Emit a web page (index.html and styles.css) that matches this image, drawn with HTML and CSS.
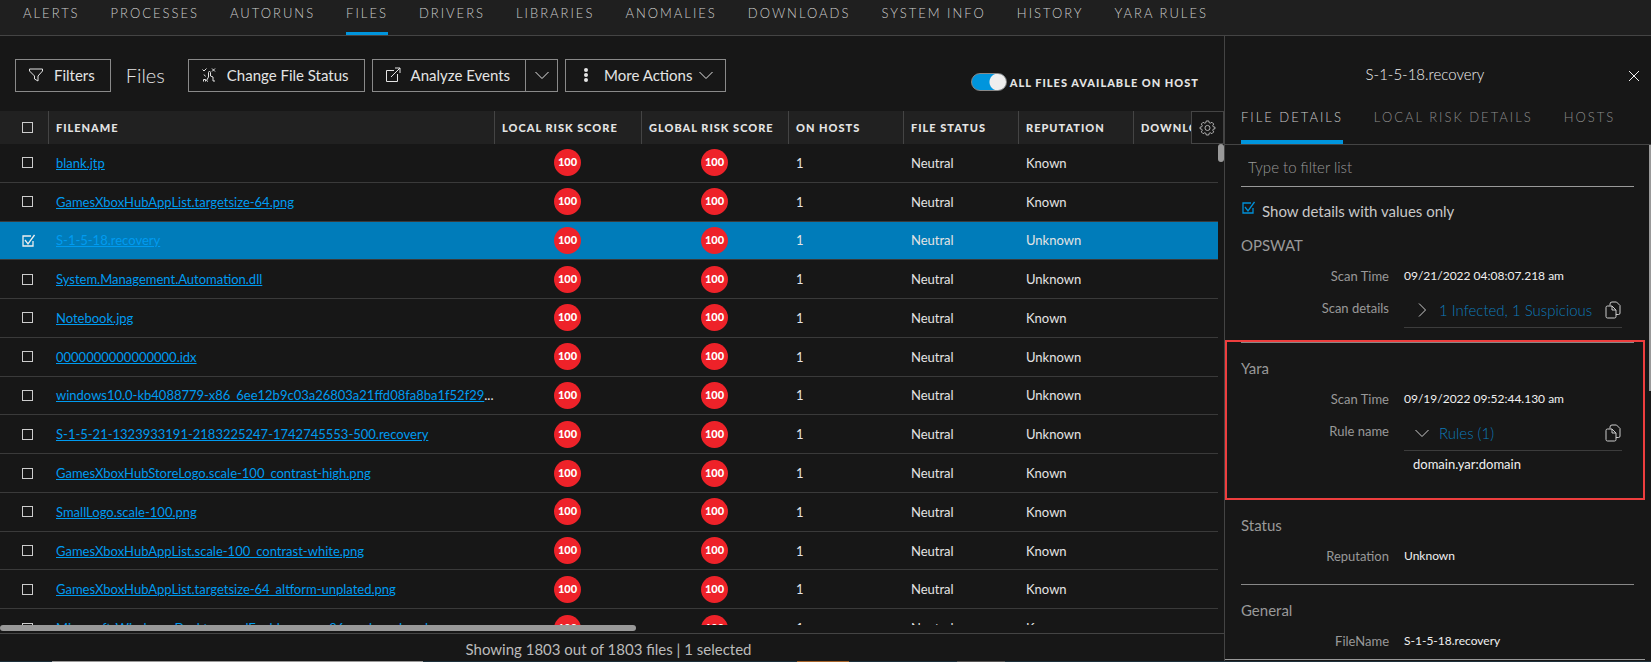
FILE: index.html
```html
<!DOCTYPE html>
<html lang="en">
<head>
    <meta charset="UTF-8">
    <meta name="viewport" content="width=device-width, initial-scale=1.0">
    <title>Hosts - Files</title>
    <link rel="stylesheet" href="styles.css">
</head>
<body>

    <svg class="sprite" aria-hidden="true">
        <symbol id="copy" viewBox="0 0 16 18">
            <path d="M5 4.500V3a2 2 0 0 1 2-2h4.500L15 4.500V12a1.500 1.500 0 0 1-1.500 1.500H11"/>
            <path d="M2.500 5H7l4 4v6.500a1.500 1.500 0 0 1-1.500 1.500h-7A1.500 1.500 0 0 1 1 15.500v-9A1.500 1.500 0 0 1 2.500 5zM7 5v4h4"/>
        </symbol>
        <symbol id="down" viewBox="0 0 16 16">
            <path d="M1.500 5L8 11.500 14.500 5"/>
        </symbol>
        <symbol id="right" viewBox="0 0 16 16">
            <path d="M5 1.500L11.500 8 5 14.500"/>
        </symbol>
    </svg>

    <nav class="top-nav">
        <a href="#">ALERTS</a>
        <a href="#">PROCESSES</a>
        <a href="#">AUTORUNS</a>
        <a href="#" class="active">FILES</a>
        <a href="#">DRIVERS</a>
        <a href="#">LIBRARIES</a>
        <a href="#">ANOMALIES</a>
        <a href="#">DOWNLOADS</a>
        <a href="#">SYSTEM INFO</a>
        <a href="#">HISTORY</a>
        <a href="#">YARA RULES</a>
    </nav>

    <div class="content">
        <main class="files">
            <div class="toolbar">
                <button class="btn filters">
                    <svg class="icon" viewBox="0 0 16 16"><path d="M1.500 2h13v2L10 9v5l-3.500-2V9L1.500 4z"/></svg>
                    Filters
                </button>
                <h1>Files</h1>
                <button class="btn status">
                    <svg class="icon" viewBox="0 0 16 16"><path d="M1.500 2.500L3 4l2.500-2.500M11 1.500l3 3M14 1.500l-3 3M7.500 10V5.500a1 1 0 0 1 2 0V9l2.500 1v4M2.500 14.500v-2h2v2M4.500 9.500L3 7.500M7.500 10l-2 3.500 1.500 1M12 14h2"/></svg>
                    Change File Status
                </button>
                <div class="btn-group">
                    <button class="btn analyze">
                        <svg class="icon" viewBox="0 0 16 16"><path d="M9 3.500H1.500v11h11V7M6 10l9-9M10 1h5v5"/></svg>
                        Analyze Events
                    </button>
                    <button class="btn caret" aria-label="Analyze options"><svg class="icon"><use href="#down"/></svg></button>
                </div>
                <button class="btn more">
                    <svg class="icon dots" viewBox="0 0 16 16"><circle cx="8" cy="3" r="2"/><circle cx="8" cy="8" r="2"/><circle cx="8" cy="13" r="2"/></svg>
                    More Actions
                    <svg class="icon"><use href="#down"/></svg>
                </button>
                <label class="toggle">
                    <input type="checkbox" role="switch" checked>
                    ALL FILES AVAILABLE ON HOST
                </label>
            </div>

            <div class="grid">
                <div class="grid-scroll">
                    <table>
                        <colgroup>
                            <col class="c-check">
                            <col class="c-name">
                            <col class="c-score">
                            <col class="c-score">
                            <col class="c-text">
                            <col class="c-text">
                            <col class="c-text">
                            <col>
                        </colgroup>
                        <thead>
                            <tr>
                                <th><input type="checkbox" class="check" aria-label="Select all"></th>
                                <th>FILENAME</th>
                                <th>LOCAL RISK SCORE</th>
                                <th>GLOBAL RISK SCORE</th>
                                <th>ON HOSTS</th>
                                <th>FILE STATUS</th>
                                <th>REPUTATION</th>
                                <th>DOWNLOADED</th>
                            </tr>
                        </thead>
                        <tbody>
                            <tr>
                                <td><input type="checkbox" class="check" aria-label="Select file"></td>
                                <td><a href="#">blank.jtp</a></td>
                                <td><span class="score">100</span></td>
                                <td><span class="score">100</span></td>
                                <td>1</td><td>Neutral</td><td>Known</td><td></td>
                            </tr>
                            <tr>
                                <td><input type="checkbox" class="check" aria-label="Select file"></td>
                                <td><a href="#">GamesXboxHubAppList.targetsize-64.png</a></td>
                                <td><span class="score">100</span></td>
                                <td><span class="score">100</span></td>
                                <td>1</td><td>Neutral</td><td>Known</td><td></td>
                            </tr>
                            <tr class="selected">
                                <td><input type="checkbox" class="check" aria-label="Select file" checked></td>
                                <td><a href="#">S-1-5-18.recovery</a></td>
                                <td><span class="score">100</span></td>
                                <td><span class="score">100</span></td>
                                <td>1</td><td>Neutral</td><td>Unknown</td><td></td>
                            </tr>
                            <tr>
                                <td><input type="checkbox" class="check" aria-label="Select file"></td>
                                <td><a href="#">System.Management.Automation.dll</a></td>
                                <td><span class="score">100</span></td>
                                <td><span class="score">100</span></td>
                                <td>1</td><td>Neutral</td><td>Unknown</td><td></td>
                            </tr>
                            <tr>
                                <td><input type="checkbox" class="check" aria-label="Select file"></td>
                                <td><a href="#">Notebook.jpg</a></td>
                                <td><span class="score">100</span></td>
                                <td><span class="score">100</span></td>
                                <td>1</td><td>Neutral</td><td>Known</td><td></td>
                            </tr>
                            <tr>
                                <td><input type="checkbox" class="check" aria-label="Select file"></td>
                                <td><a href="#">0000000000000000.idx</a></td>
                                <td><span class="score">100</span></td>
                                <td><span class="score">100</span></td>
                                <td>1</td><td>Neutral</td><td>Unknown</td><td></td>
                            </tr>
                            <tr>
                                <td><input type="checkbox" class="check" aria-label="Select file"></td>
                                <td><a href="#">windows10.0-kb4088779-x86_6ee12b9c03a26803a21ffd08fa8ba1f52f29</a>...</td>
                                <td><span class="score">100</span></td>
                                <td><span class="score">100</span></td>
                                <td>1</td><td>Neutral</td><td>Unknown</td><td></td>
                            </tr>
                            <tr>
                                <td><input type="checkbox" class="check" aria-label="Select file"></td>
                                <td><a href="#">S-1-5-21-1323933191-2183225247-1742745553-500.recovery</a></td>
                                <td><span class="score">100</span></td>
                                <td><span class="score">100</span></td>
                                <td>1</td><td>Neutral</td><td>Unknown</td><td></td>
                            </tr>
                            <tr>
                                <td><input type="checkbox" class="check" aria-label="Select file"></td>
                                <td><a href="#">GamesXboxHubStoreLogo.scale-100_contrast-high.png</a></td>
                                <td><span class="score">100</span></td>
                                <td><span class="score">100</span></td>
                                <td>1</td><td>Neutral</td><td>Known</td><td></td>
                            </tr>
                            <tr>
                                <td><input type="checkbox" class="check" aria-label="Select file"></td>
                                <td><a href="#">SmallLogo.scale-100.png</a></td>
                                <td><span class="score">100</span></td>
                                <td><span class="score">100</span></td>
                                <td>1</td><td>Neutral</td><td>Known</td><td></td>
                            </tr>
                            <tr>
                                <td><input type="checkbox" class="check" aria-label="Select file"></td>
                                <td><a href="#">GamesXboxHubAppList.scale-100_contrast-white.png</a></td>
                                <td><span class="score">100</span></td>
                                <td><span class="score">100</span></td>
                                <td>1</td><td>Neutral</td><td>Known</td><td></td>
                            </tr>
                            <tr>
                                <td><input type="checkbox" class="check" aria-label="Select file"></td>
                                <td><a href="#">GamesXboxHubAppList.targetsize-64_altform-unplated.png</a></td>
                                <td><span class="score">100</span></td>
                                <td><span class="score">100</span></td>
                                <td>1</td><td>Neutral</td><td>Known</td><td></td>
                            </tr>
                            <tr>
                                <td><input type="checkbox" class="check" aria-label="Select file"></td>
                                <td><a href="#">Microsoft-Windows-Desktop-audEnable-apps-x86-package.Local</a></td>
                                <td><span class="score">100</span></td>
                                <td><span class="score">100</span></td>
                                <td>1</td><td>Neutral</td><td>Known</td><td></td>
                            </tr>
                        </tbody>
                    </table>
                </div>
                <div class="rail"><div class="thumb"></div></div>
                <button class="gear" aria-label="Choose columns">
                    <svg viewBox="0 0 16 16"><path d="M6.700 1h2.600l.5 1.900 1.200.5 1.700-1 1.900 1.900-1 1.700.5 1.200 1.900.5v1.600l-1.900.5-.5 1.200 1 1.700-1.900 1.900-1.700-1-1.200.5-.5 1.900H6.700l-.5-1.900-1.200-.5-1.700 1-1.900-1.900 1-1.700-.5-1.200L0 9.300V7.700l1.900-.5.500-1.200-1-1.700 1.900-1.900 1.700 1 1.200-.5z"/><circle cx="8" cy="8.500" r="2.700"/></svg>
                </button>
            </div>
            <div class="h-rail"><div class="thumb"></div></div>
            <footer>Showing 1803 out of 1803 files | 1 selected</footer>
        </main>

        <aside class="details">
            <header>
                <h2>S-1-5-18.recovery</h2>
                <button class="close" aria-label="Close">
                    <svg class="icon" viewBox="0 0 16 16"><path d="M3 3l10 10M13 3L3 13"/></svg>
                </button>
            </header>
            <nav class="tabs">
                <a href="#" class="active">FILE DETAILS</a>
                <a href="#">LOCAL RISK DETAILS</a>
                <a href="#">HOSTS</a>
            </nav>
            <div class="props">
                <input type="text" class="filter" placeholder="Type to filter list" aria-label="Filter list">
                <label class="values-only">
                    <input type="checkbox" class="check blue" checked>
                    Show details with values only
                </label>

                <section>
                    <h3>OPSWAT</h3>
                    <dl>
                        <dt>Scan Time</dt>
                        <dd>09/21/2022 04:08:07.218 am</dd>
                        <dt>Scan details</dt>
                        <dd>
                            <div class="expander">
                                <button class="expand"><svg class="icon"><use href="#right"/></svg>1 Infected, 1 Suspicious</button>
                                <button class="copy" aria-label="Copy"><svg><use href="#copy"/></svg></button>
                            </div>
                        </dd>
                    </dl>
                </section>

                <section class="highlight">
                    <h3>Yara</h3>
                    <dl>
                        <dt>Scan Time</dt>
                        <dd>09/19/2022 09:52:44.130 am</dd>
                        <dt>Rule name</dt>
                        <dd>
                            <div class="expander">
                                <button class="expand"><svg class="icon"><use href="#down"/></svg>Rules (1)</button>
                                <button class="copy" aria-label="Copy"><svg><use href="#copy"/></svg></button>
                            </div>
                            <p class="rule">domain.yar:domain</p>
                        </dd>
                    </dl>
                </section>

                <section>
                    <h3>Status</h3>
                    <dl>
                        <dt>Reputation</dt>
                        <dd>Unknown</dd>
                    </dl>
                </section>

                <section>
                    <h3>General</h3>
                    <dl>
                        <dt>FileName</dt>
                        <dd>S-1-5-18.recovery</dd>
                    </dl>
                </section>
            </div>
            <div class="details-rail"></div>
        </aside>
    </div>

    <div class="taskbar">
        <span class="task"></span>
        <span class="task orange"></span>
        <span class="task small"></span>
    </div>

</body>
</html>
```
FILE: styles.css
```css
* {
    box-sizing: border-box;
}
body {
    display: flex;
    flex-direction: column;
    height: 100vh;
    margin: 0;
    overflow: hidden;
    background-color: #171717;
    color: #e4e4e4;
    font-family: Lato, sans-serif;
    font-size: 13px;
}
h1, h2, h3, p, dl, dd {
    margin: 0;
    font-weight: 400;
}
button {
    padding: 0;
    border: none;
    background: none;
    color: inherit;
    font: inherit;
    cursor: pointer;
}
.sprite {
    display: none;
}
svg {
    fill: none;
    stroke: currentColor;
}
.icon {
    width: 16px;
    height: 16px;
    flex: none;
}

/* tabs */
.top-nav, .tabs {
    display: flex;
    flex: none;
    gap: 31px;
    border-bottom: 1px solid #444;
    letter-spacing: 2px;
    font-weight: 300;
}
.top-nav {
    height: 36px;
    padding: 0 23px;
    background-color: #1f1f1f;
}
.top-nav a, .tabs a {
    color: #ccc;
    text-decoration: none;
    white-space: nowrap;
}
.top-nav a {
    line-height: 26px;
}
.top-nav .active {
    border-bottom: 3px solid #0095dd;
}

.content {
    display: flex;
    flex: 1;
    min-height: 0;
}
.files {
    display: flex;
    flex-direction: column;
    flex: 1;
    min-width: 0;
}

/* toolbar */
.toolbar {
    display: flex;
    flex: none;
    align-items: center;
    height: 75px;
    padding: 3px 25px 0 15px;
}
.btn {
    display: flex;
    align-items: center;
    height: 33px;
    padding: 0 15px 0 12px;
    border: 1px solid #8a8a8a;
    font-size: 15px;
    white-space: nowrap;
}
.btn .icon {
    margin-right: 10px;
}
.toolbar h1 {
    margin: 0 23px 0 15px;
    font-size: 20px;
    font-weight: 300;
}
.btn-group {
    display: flex;
    margin: 0 7px;
}
.caret {
    width: 32px;
    justify-content: center;
    padding: 0;
    border-left: none;
}
.more .icon:last-child {
    margin-left: 6px;
}
.more {
    padding-right: 11px;
}
.caret .icon, .more .icon:last-child {
    margin-right: 0;
}
.dots {
    fill: currentColor;
    stroke: none;
}
.toggle {
    display: flex;
    align-items: center;
    gap: 3px;
    margin: 14px 0 0 auto;
    font-size: 11px;
    font-weight: 900;
    letter-spacing: 1px;
    white-space: nowrap;
}
.toggle input {
    appearance: none;
    width: 36px;
    height: 18px;
    margin: 0;
    border: 1px solid #888;
    border-radius: 9px;
    background: radial-gradient(circle at 26px 8px, #eee 8px, #0095dd 9px);
}

/* file table */
.grid {
    position: relative;
    display: flex;
    flex: 1;
    min-height: 0;
    overflow: hidden;
}
.grid-scroll {
    flex: 1;
    min-width: 0;
    overflow: hidden;
}
table {
    width: 100%;
    height: 537px;
    table-layout: fixed;
    border-collapse: separate;
    border-spacing: 0;
}
.c-check {
    width: 49px;
}
.c-name {
    width: 446px;
}
.c-score {
    width: 147px;
}
.c-text {
    width: 115px;
}
th, td {
    padding: 0 0 0 7px;
    text-align: left;
    white-space: nowrap;
    overflow: hidden;
}
th {
    height: 33px;
    border-right: 1px solid #444;
    background-color: #212121;
    font-size: 11px;
    font-weight: 900;
    letter-spacing: 1px;
}
td {
    border-bottom: 1px solid #3a3a3a;
}
th:first-child, td:first-child {
    padding-left: 22px;
}
td:nth-child(3), td:nth-child(4) {
    padding: 0 2px 0 0;
    text-align: center;
}
td a {
    color: #009bf0;
}
.selected td {
    background-color: #007cba;
}
.score {
    display: inline-block;
    width: 27px;
    height: 27px;
    border-radius: 50%;
    background-color: #ee2229;
    color: #fff;
    font-size: 11px;
    font-weight: 900;
    line-height: 26px;
    vertical-align: middle;
}
.check {
    appearance: none;
    display: block;
    width: 11px;
    height: 11px;
    margin: 0;
    border: 1px solid #ccc;
}
.check:checked {
    width: 13px;
    height: 13px;
    border: none;
    background: url("data:image/svg+xml,%3Csvg xmlns='http://www.w3.org/2000/svg' viewBox='0 0 13 13' fill='none' stroke='%23eee' stroke-width='1.3'%3E%3Cpath d='M9 2H1v10h10V7M3 6l3 4 6.500-9'/%3E%3C/svg%3E");
}
.blue:checked {
    background-image: url("data:image/svg+xml,%3Csvg xmlns='http://www.w3.org/2000/svg' viewBox='0 0 13 13' fill='none' stroke='%230090d8' stroke-width='1.3'%3E%3Cpath d='M9 2H1v10h10V7M3 6l3 4 6.500-9'/%3E%3C/svg%3E");
}
.gear {
    position: absolute;
    top: 0;
    right: 0;
    display: flex;
    align-items: center;
    justify-content: center;
    width: 33px;
    height: 33px;
    border: 1px solid #444;
    background-color: #171717;
    color: #bbb;
}
.gear svg {
    width: 15px;
    height: 15px;
    overflow: visible;
}
.rail {
    width: 6px;
    flex: none;
    padding-top: 33px;
}
.thumb {
    border-radius: 3px;
    background-color: #999;
}
.rail .thumb {
    height: 18px;
}
.h-rail {
    flex: none;
    padding-bottom: 2px;
    border-bottom: 1px solid #444;
}
.h-rail .thumb {
    width: 52%;
    height: 6px;
}
footer {
    flex: none;
    height: 27px;
    padding-right: 7px;
    color: #bbb;
    font-size: 15px;
    line-height: 31px;
    text-align: center;
}

/* details panel */
.details {
    position: relative;
    display: flex;
    flex-direction: column;
    width: 427px;
    flex: none;
    padding-bottom: 1px;
    border-left: 1px solid #444;
    color: #f0f0f0;
}
.details header {
    position: relative;
    flex: none;
    height: 64px;
    padding: 27px 26px 0 0;
    text-align: center;
}
.details h2 {
    font-size: 15px;
    line-height: 22px;
    font-weight: 300;
}
.close {
    position: absolute;
    top: 32px;
    right: 9px;
    height: 16px;
}
.tabs {
    height: 45px;
    padding: 0 16px;
}
.tabs a {
    line-height: 34px;
    color: #8c8c8c;
}
.tabs .active {
    border-bottom: 4px solid #0095dd;
    color: #ccc;
}
.props {
    flex: 1;
    min-height: 0;
    overflow: hidden;
    margin-right: 6px;
    padding: 5px 11px 0 16px;
    border-bottom: 1px solid #999;
}
.filter {
    width: 100%;
    height: 37px;
    padding: 0 7px 2px;
    border: none;
    border-bottom: 1px solid #999;
    background: none;
    color: #e4e4e4;
    font: 300 15px Lato, sans-serif;
}
.filter::placeholder {
    color: #999;
}
.values-only {
    display: flex;
    gap: 7px;
    height: 33px;
    padding: 14px 0 0 1px;
    color: #c8c8c8;
    font-size: 15px;
    line-height: 20px;
}
section {
    position: relative;
    padding: 13px 0 12px;
    border-bottom: 1px solid #888;
}
.highlight::after {
    content: "";
    position: absolute;
    top: -3px;
    right: -11px;
    bottom: -1px;
    left: -16px;
    border: 2px solid #ee3e3e;
    pointer-events: none;
}
h3 {
    margin-bottom: 3px;
    color: #999;
    font-size: 15px;
    line-height: 24px;
}
dl {
    display: grid;
    grid-template-columns: 148px 1fr;
    column-gap: 15px;
    padding-right: 12px;
    line-height: 32px;
}
dt {
    color: #999;
    text-align: right;
}
dd {
    font-size: 12px;
}
.expander {
    display: flex;
    align-items: center;
    justify-content: space-between;
    height: 36px;
    margin-bottom: 2px;
    padding-right: 1px;
    border-bottom: 1px solid #3c3c3c;
}
.expand {
    display: flex;
    align-items: center;
    gap: 9px;
    padding-left: 10px;
    color: #0d7ab8;
    font-size: 15px;
    font-weight: 300;
}
.expand .icon, .copy {
    color: #ccc;
}
.copy, .copy svg {
    display: block;
    width: 16px;
    height: 18px;
}
.rule {
    margin-bottom: 12px;
    padding-left: 9px;
    font-size: 13px;
    line-height: 22px;
}
.details-rail {
    position: absolute;
    top: 109px;
    right: 0;
    width: 2px;
    height: 246px;
    background-color: #999;
}

/* strip under the window */
.taskbar {
    display: flex;
    flex: none;
    height: 1px;
    padding-left: 52px;
    background-color: #1d303b;
}
.task {
    width: 371px;
    background-color: #999;
}
.orange {
    width: 52px;
    margin: 0 108px 0 374px;
    background-color: #a8652a;
}
.small {
    width: 48px;
    background-color: #555;
}
```
